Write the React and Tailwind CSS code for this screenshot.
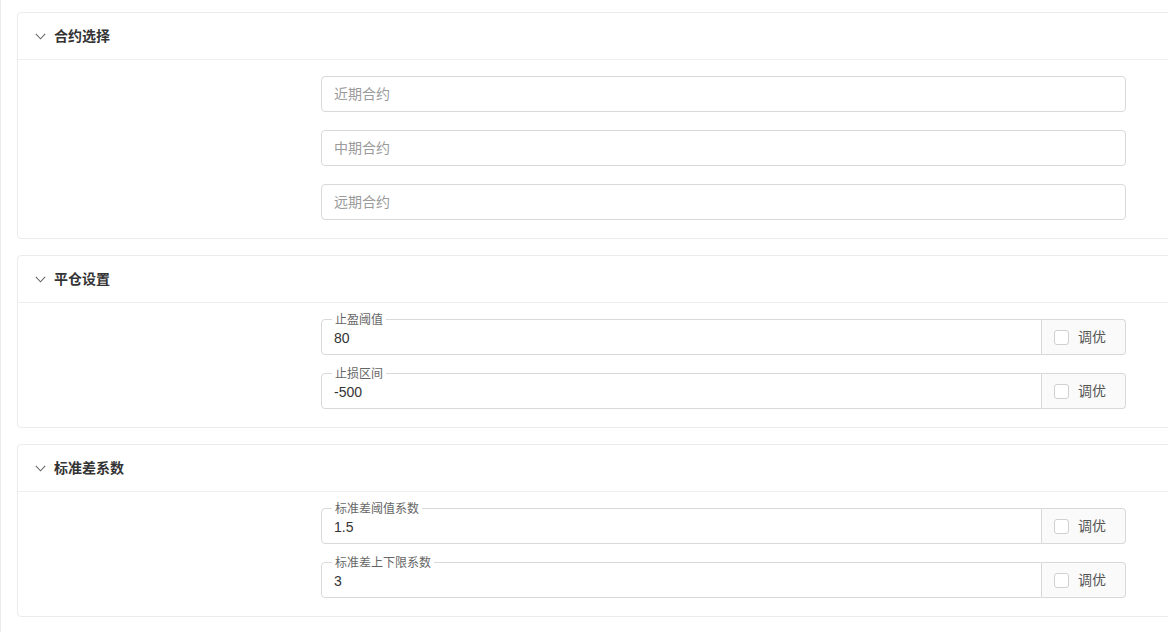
import React from 'react';

const font = { fontFamily: '"Liberation Sans", "Noto Sans CJK SC", sans-serif' };

const sections = [
  {
    title: '合约选择',
    fields: [
      { placeholder: '近期合约' },
      { placeholder: '中期合约' },
      { placeholder: '远期合约' },
    ],
  },
  {
    title: '平仓设置',
    fields: [
      { label: '止盈阈值', value: '80', tune: true },
      { label: '止损区间', value: '-500', tune: true },
    ],
  },
  {
    title: '标准差系数',
    fields: [
      { label: '标准差阈值系数', value: '1.5', tune: true },
      { label: '标准差上下限系数', value: '3', tune: true },
    ],
  },
];

const Chevron = () => (
  <svg width="11" height="7" viewBox="0 0 11 7" fill="none">
    <path d="M0.8 0.8 L5.5 5.8 L10.2 0.8" stroke="#666" strokeWidth="1.1" />
  </svg>
);

const Field = ({ field }) => {
  if (!field.tune) {
    return (
      <div className="h-9 w-[805px] rounded border border-[#d9d9d9] flex items-center px-3 text-sm text-[#9a9a9a]">
        {field.placeholder}
      </div>
    );
  }
  return (
    <div className="flex h-9 w-[805px]">
      <div className="relative flex-1 rounded-l border border-[#d9d9d9] flex items-center px-3 text-sm text-[#333]">
        <span className="absolute -top-[8px] left-[10px] bg-white px-[3px] text-xs leading-4 text-[#666]">
          {field.label}
        </span>
        <span className="pt-[2px]">{field.value}</span>
      </div>
      <div className="w-[84px] rounded-r border border-l-0 border-[#d9d9d9] bg-[#fafafa] flex items-center pl-3 gap-[9px] text-sm text-[#555]">
        <span className="w-[15px] h-[15px] rounded-[3px] border border-[#d0d0d0] bg-white" />
        <span>调优</span>
      </div>
    </div>
  );
};

export default function App() {
  return (
    <div style={font} className="h-[632px] overflow-hidden bg-white border-l border-[#ececec]">
      <div className="pl-4 pt-3 flex flex-col gap-4 w-[1200px]">
        {sections.map((s, i) => (
          <div key={i} className="rounded border border-[#ebebeb]">
            <div className="h-[47px] border-b border-[#eeeeee] flex items-center pl-[17px] gap-[8px]">
              <Chevron />
              <span className="text-sm font-semibold text-[#333]">{s.title}</span>
            </div>
            <div className="pt-4 pb-[18px] pl-[303px] flex flex-col gap-[18px]">
              {s.fields.map((f, j) => (
                <Field key={j} field={f} />
              ))}
            </div>
          </div>
        ))}
      </div>
    </div>
  );
}
